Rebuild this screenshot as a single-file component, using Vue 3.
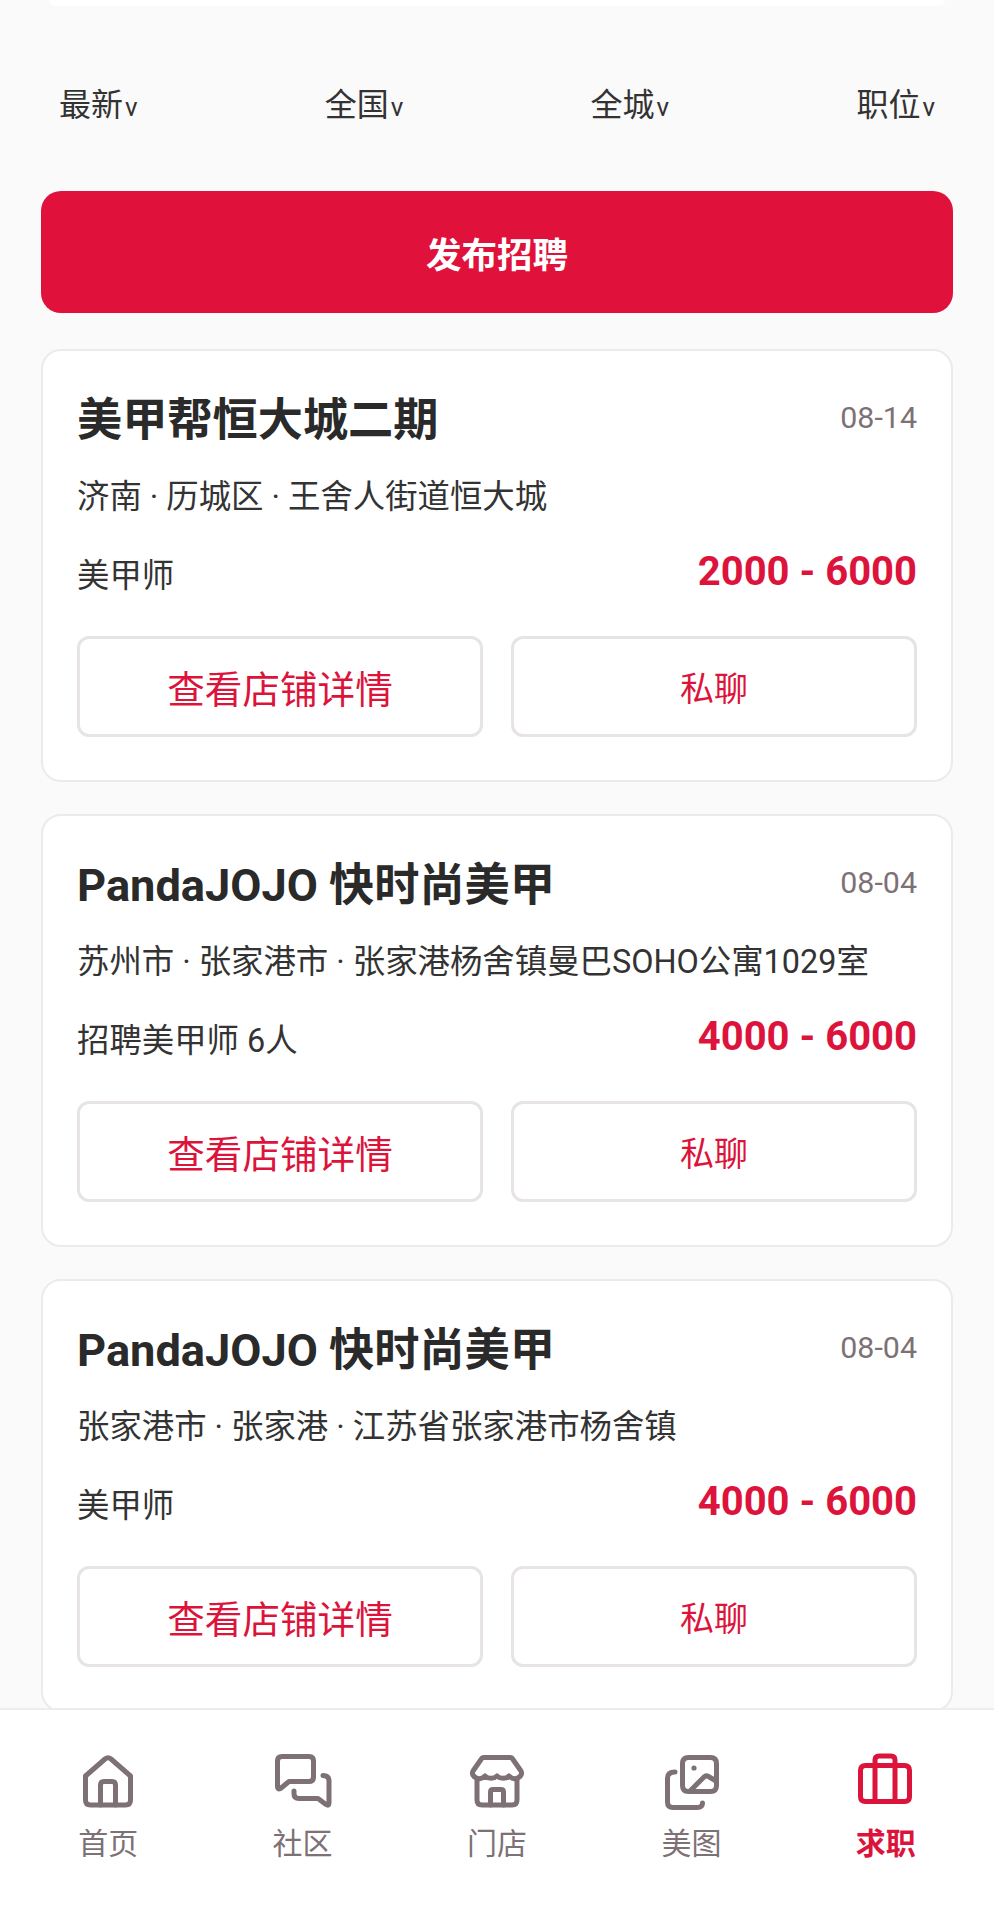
<script setup>
const filters = ['最新', '全国', '全城', '职位']

const jobs = [
  { id: 1, name: '美甲帮恒大城二期', date: '08-14', address: '济南 · 历城区 · 王舍人街道恒大城', role: '美甲师', salary: '2000 - 6000' },
  { id: 2, name: 'PandaJOJO 快时尚美甲', date: '08-04', address: '苏州市 · 张家港市 · 张家港杨舍镇曼巴SOHO公寓1029室', role: '招聘美甲师 6人', salary: '4000 - 6000' },
  { id: 3, name: 'PandaJOJO 快时尚美甲', date: '08-04', address: '张家港市 · 张家港 · 江苏省张家港市杨舍镇', role: '美甲师', salary: '4000 - 6000' }
]

const tabs = [
  { label: '首页', paths: ['M7.5 26 L27 9 Q30 6.5 33 9 L52.5 26 V50 Q52.5 55 47.5 55 H12.5 Q7.5 55 7.5 50 Z', 'M22.5 55 V35 Q22.5 31.5 26 31.5 H34 Q37.5 31.5 37.5 35 V55'] },
  { label: '社区', paths: ['M9 6.5 H36 Q40.5 6.5 40.5 11 V27 Q40.5 31.5 36 31.5 H16 L7.5 38.5 Q4.5 40 4.5 36.5 V11 Q4.5 6.5 9 6.5 Z', 'M50 25.5 Q56 25.5 56 31 V53 Q56 56.5 53 54.5 L45 48.5 H26 Q21 48.5 21 44 V41'] },
  { label: '门店', paths: ['M17 7.5 H43 Q45 7.5 46 9.5 L54 21 Q55.5 24 53 26.5 C49 30 45 29 42 26 C39 29 33 29 30 26 C27 29 21 29 18 26 C15 29 11 30 7 26.5 Q4.5 24 6 21 L14 9.5 Q15 7.5 17 7.5 Z', 'M10 30 V50 Q10 55 15 55 H45 Q50 55 50 50 V30', 'M23.5 55 V42 Q23.5 39.5 26 39.5 H34 Q36.5 39.5 36.5 42 V55'] },
  { label: '美图', paths: ['M27.5 7.5 H49.5 Q55.5 7.5 55.5 13.5 V35.5 Q55.5 41.5 49.5 41.5 H27.5 Q21.5 41.5 21.5 35.5 V13.5 Q21.5 7.5 27.5 7.5 Z', 'M29 41 L43 27 Q45 25 47.5 26.5 L55 31', 'M14 22 Q6.5 22 6.5 28 V52 Q6.5 57.5 12 57.5 H36 Q41.5 57.5 41.5 53'], dot: { cx: 33, cy: 18, r: 2.6 } },
  { label: '求职', active: true, paths: ['M9.5 15.5 H48.5 Q53.5 15.5 53.5 20.5 V46.5 Q53.5 51.5 48.5 51.5 H9.5 Q4.5 51.5 4.5 46.5 V20.5 Q4.5 15.5 9.5 15.5 Z', 'M19 51.5 V10 Q19 6 23 6 H35 Q39 6 39 10 V51.5'] }
]
</script>

<template>
  <div class="page">
    <main class="content">
      <div class="top-card"></div>

      <div class="filters">
        <div v-for="item in filters" :key="item" class="filter">
          {{ item }}<span class="caret">v</span>
        </div>
      </div>

      <button class="publish">发布招聘</button>

      <div class="job-list">
        <div v-for="job in jobs" :key="job.id" class="job-card">
          <div class="job-head">
            <h3 class="job-name">{{ job.name }}</h3>
            <span class="job-date">{{ job.date }}</span>
          </div>
          <div class="job-address">{{ job.address }}</div>
          <div class="job-meta">
            <span class="job-role">{{ job.role }}</span>
            <span class="job-salary">{{ job.salary }}</span>
          </div>
          <div class="job-actions">
            <button class="action">查看店铺详情</button>
            <button class="action action-chat">私聊</button>
          </div>
        </div>
      </div>
    </main>

    <nav class="tabbar">
      <div v-for="tab in tabs" :key="tab.label" class="tab" :class="{ active: tab.active }">
        <svg class="tab-icon" width="60" height="60" viewBox="0 0 60 60" fill="none" stroke="currentColor" stroke-width="5" stroke-linecap="round" stroke-linejoin="round">
          <path v-for="d in tab.paths" :key="d" :d="d" />
          <circle v-if="tab.dot" :cx="tab.dot.cx" :cy="tab.dot.cy" :r="tab.dot.r" fill="currentColor" stroke="none" />
        </svg>
        <span class="tab-label">{{ tab.label }}</span>
      </div>
    </nav>
  </div>
</template>

<style>
html,
body {
  margin: 0;
  background: #fafafa;
}
</style>

<style scoped>
.page {
  width: 994px;
  height: 1920px;
  display: flex;
  flex-direction: column;
  overflow: hidden;
  background: #fafafa;
  font-family: Roboto, "Noto Sans CJK SC", sans-serif;
}

.content {
  flex: 1;
  min-height: 0;
  overflow: hidden;
  padding: 0 41px;
}

.top-card {
  height: 6px;
  margin: 0 8px;
  background: #fff;
  border-radius: 0 0 12px 12px;
}

.filters {
  display: flex;
  justify-content: space-between;
  padding: 76px 18px 0;
  height: 111px;
  box-sizing: border-box;
}

.filter {
  font-size: 32px;
  line-height: 46px;
  color: #333;
}

.caret {
  margin-left: 2px;
  font-size: 26px;
}

.publish {
  display: block;
  width: 100%;
  height: 122px;
  margin-top: 74px;
  padding-top: 2px;
  border: none;
  border-radius: 20px;
  background: #e0123c;
  color: #fff;
  font-family: inherit;
  font-size: 35.5px;
  font-weight: 700;
}

.job-list {
  display: flex;
  flex-direction: column;
  gap: 32px;
  margin-top: 36px;
}

.job-card {
  box-sizing: border-box;
  height: 433px;
  padding: 38px 34px 0;
  background: #fff;
  border: 2px solid #eee9eb;
  border-radius: 20px;
}

.job-head {
  display: flex;
  justify-content: space-between;
  align-items: center;
  height: 64px;
}

.job-name {
  margin: 0;
  font-size: 45.2px;
  font-weight: 700;
  line-height: 64px;
  color: #2a2a2a;
}

.job-date {
  font-size: 30.4px;
  color: #7d7175;
  margin-top: -7px;
}

.job-address {
  margin-top: 21px;
  font-size: 32.4px;
  line-height: 46px;
  color: #333;
}

.job-meta {
  display: flex;
  justify-content: space-between;
  align-items: center;
  margin-top: 28px;
  height: 48px;
}

.job-role {
  font-size: 32.4px;
  color: #333;
}

.job-salary {
  font-size: 40px;
  font-weight: 700;
  color: #dc143c;
  margin-top: -2px;
}

.job-actions {
  display: flex;
  gap: 28px;
  margin-top: 40px;
}

.action {
  flex: 1;
  height: 101px;
  background: #fff;
  border: 3px solid #e8e3e5;
  border-radius: 12px;
  color: #dc143c;
  font-family: inherit;
  font-size: 37.6px;
}

.action-chat {
  font-size: 34px;
}

.tabbar {
  flex: none;
  box-sizing: border-box;
  height: 212px;
  display: grid;
  grid-template-columns: repeat(5, 1fr);
  padding: 40px 11px 0;
  background: #fff;
  border-top: 2px solid #eeecec;
}

.tab {
  display: flex;
  flex-direction: column;
  align-items: center;
  color: #7d7175;
}

.tab.active {
  color: #dc143c;
}

.tab-icon {
  display: block;
  overflow: visible;
}

.tab-label {
  margin-top: 12px;
  font-size: 30px;
  line-height: 44px;
}

.tab.active .tab-label {
  font-weight: 700;
}
</style>
